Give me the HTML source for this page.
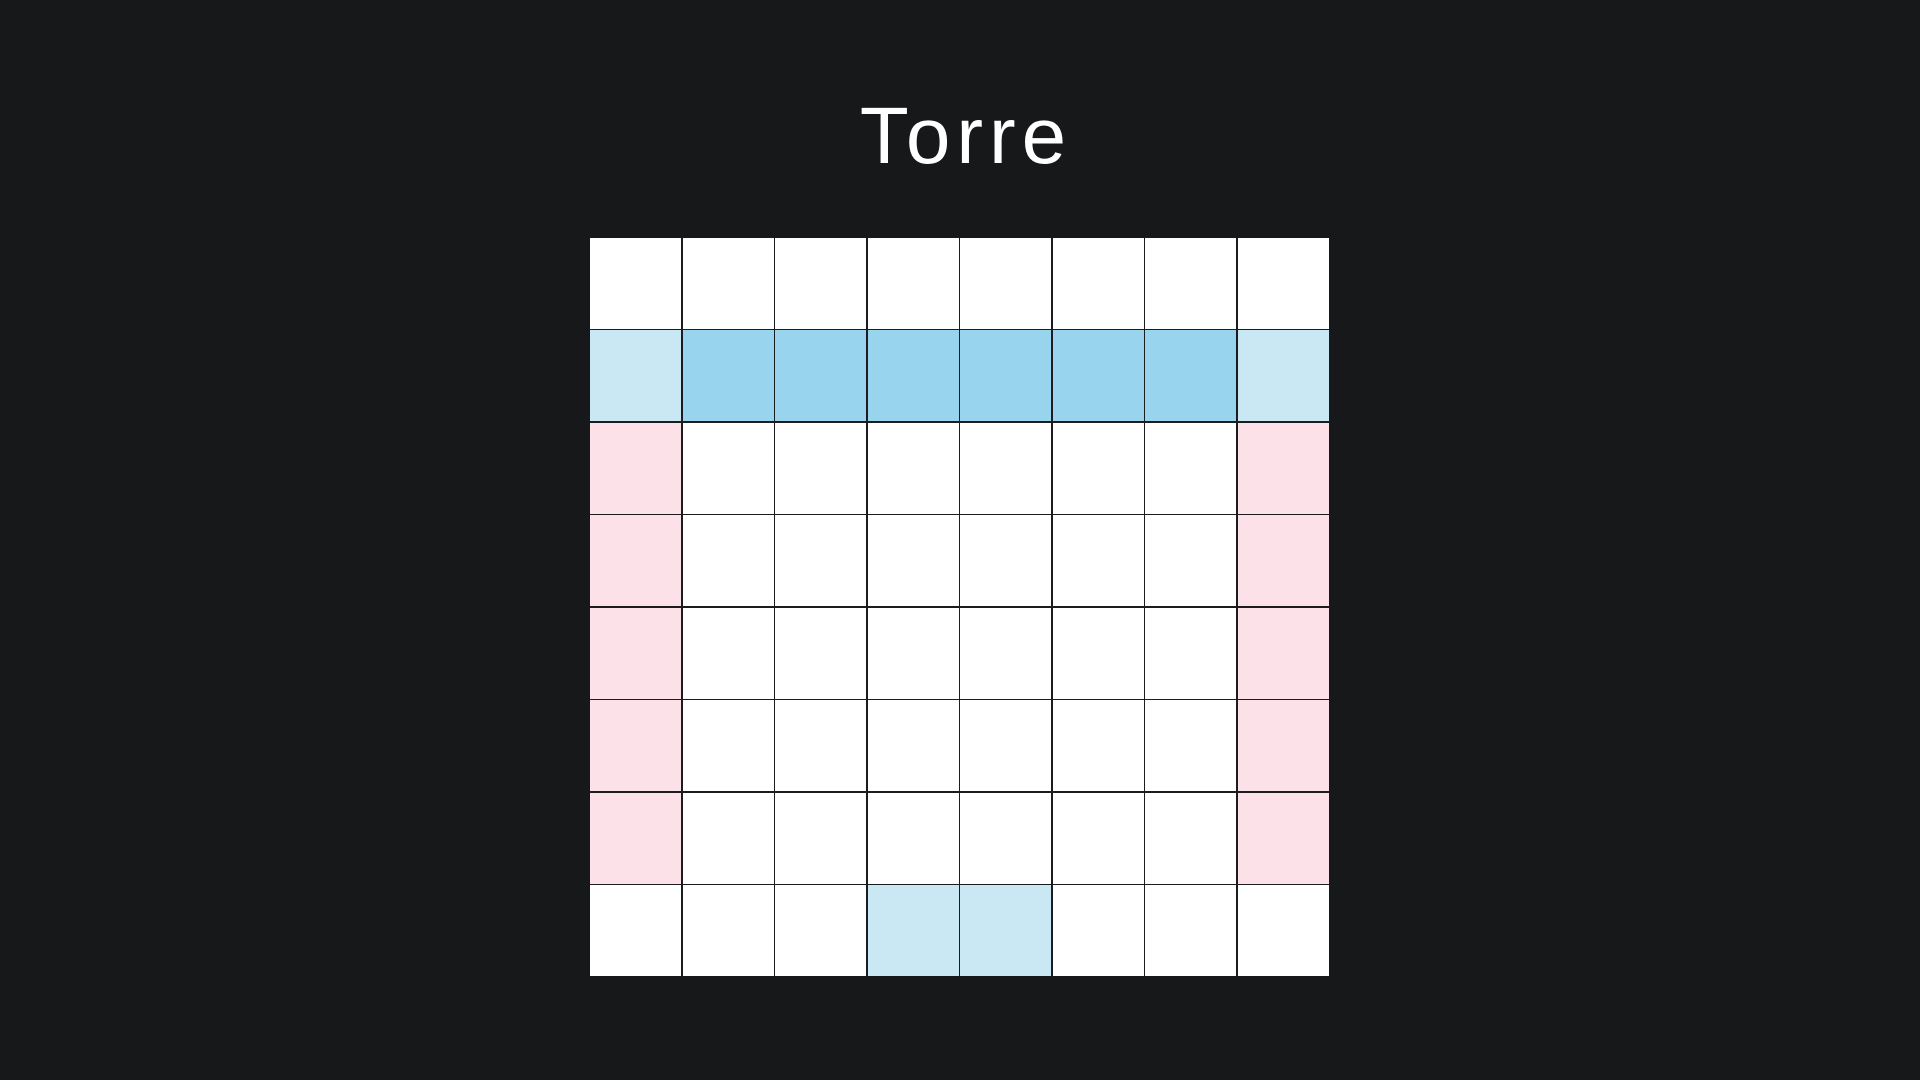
<!DOCTYPE html>
<html><head><meta charset="utf-8"><style>
html,body{margin:0;padding:0;width:1920px;height:1080px;background:#17181a;overflow:hidden}
h1{position:absolute;left:0;width:1920px;top:81px;margin:0;text-align:center;font:300 80px "Liberation Sans",sans-serif;color:#fff;letter-spacing:6px;line-height:110px;padding-left:6px}
.g{position:absolute;left:590px;top:238px;width:739px;height:738px;display:grid;grid-template-columns:repeat(8,1fr);grid-template-rows:repeat(8,1fr);gap:1.6px;background:#1c1c1e}
.g div{background:#fff}
.l{background:#c9e8f3!important}.b{background:#98d4ed!important}.p{background:#fde1e8!important}
</style></head><body>
<h1>Torre</h1>
<div class="g">
<div></div><div></div><div></div><div></div><div></div><div></div><div></div><div></div>
<div class="l"></div><div class="b"></div><div class="b"></div><div class="b"></div><div class="b"></div><div class="b"></div><div class="b"></div><div class="l"></div>
<div class="p"></div><div></div><div></div><div></div><div></div><div></div><div></div><div class="p"></div>
<div class="p"></div><div></div><div></div><div></div><div></div><div></div><div></div><div class="p"></div>
<div class="p"></div><div></div><div></div><div></div><div></div><div></div><div></div><div class="p"></div>
<div class="p"></div><div></div><div></div><div></div><div></div><div></div><div></div><div class="p"></div>
<div class="p"></div><div></div><div></div><div></div><div></div><div></div><div></div><div class="p"></div>
<div></div><div></div><div></div><div class="l"></div><div class="l"></div><div></div><div></div><div></div>
</div>
</body></html>
